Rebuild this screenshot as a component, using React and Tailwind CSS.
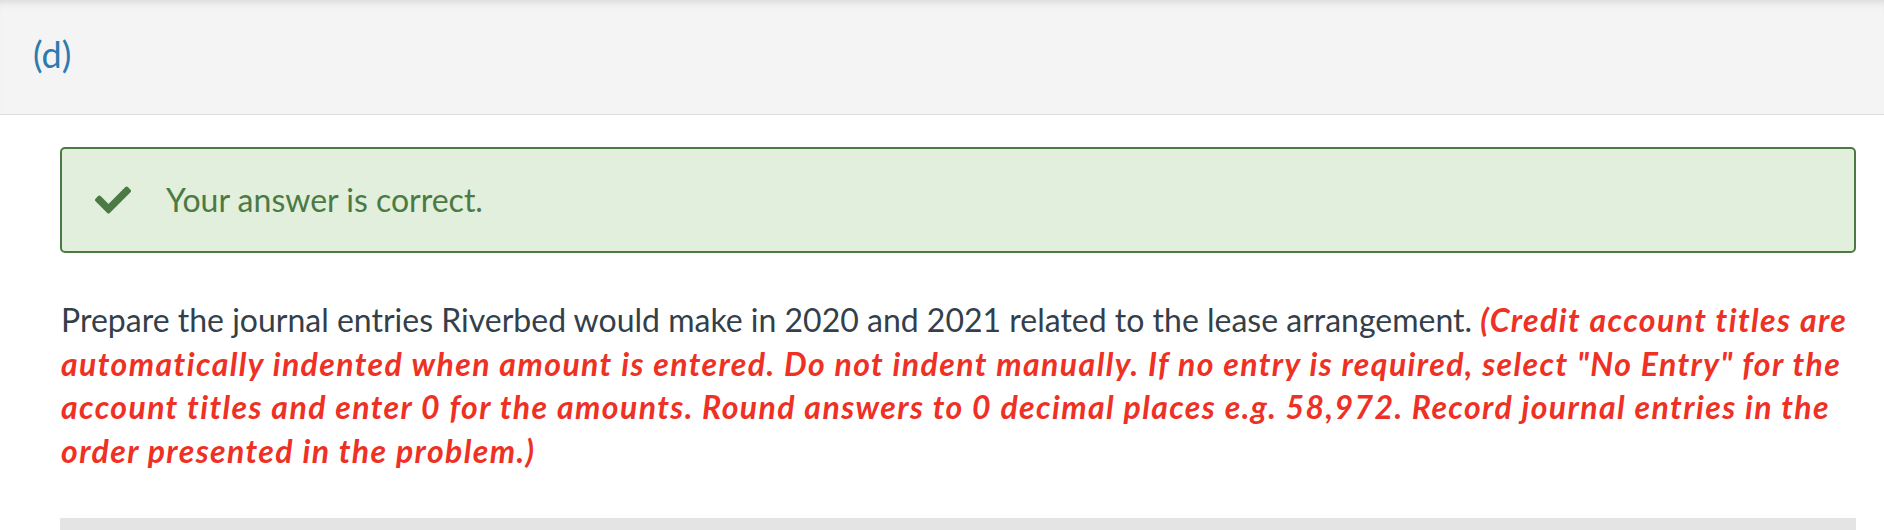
import React from 'react';

const CheckIcon = () => (
  <svg viewBox="0 0 512 512" className="w-[36px] h-[36px] shrink-0" fill="currentColor">
    <path d="M173.898 439.404l-166.4-166.4c-9.997-9.997-9.997-26.206 0-36.204l36.203-36.204c9.997-9.998 26.207-9.998 36.204 0L192 312.69 432.095 72.596c9.997-9.997 26.207-9.997 36.204 0l36.203 36.204c9.997 9.997 9.997 26.206 0 36.204l-294.4 294.401c-9.998 9.997-26.207 9.997-36.204-.001z" />
  </svg>
);

export default function App() {
  return (
    <div className="min-h-[530px] bg-white font-['Lato','Liberation_Sans',sans-serif]">
      {/* Part header */}
      <div className="h-[115px] bg-[#f4f4f4] border-b border-[#dcdcdc] shadow-[inset_0_8px_8px_-6px_rgba(0,0,0,0.12)] flex items-center px-[33px] pb-[6px]">
        <span className="text-[36px] text-[#2d7ab0] leading-none">(d)</span>
      </div>

      <div className="px-[60px] pr-[28px]">
        {/* Result banner */}
        <div className="mt-[32px] h-[106px] rounded-[5px] border-2 border-[#4b7a44] bg-[#e1efdc] flex items-center pl-[33px] gap-[35px] text-[#4b7a44]">
          <CheckIcon />
          <span className="text-[32px] leading-none">Your answer is correct.</span>
        </div>

        {/* Question text */}
        <p className="mt-[45px] pl-[1px] text-[32px] leading-[43.5px] text-[#333f4a]">
          Prepare the journal entries Riverbed would make in 2020 and 2021 related to the lease arrangement.{' '}
          <b className="italic font-bold tracking-[0.044em] text-[#ee3124]">
            (Credit account titles are automatically indented when amount is entered. Do not indent manually. If no entry is required, select "No Entry" for the account titles and enter 0 for the amounts. Round answers to 0 decimal places e.g. 58,972. Record journal entries in the order presented in the problem.)
          </b>
        </p>

        <div className="mt-[46px] h-[20px] bg-[#e4e4e4]" />
      </div>
    </div>
  );
}
